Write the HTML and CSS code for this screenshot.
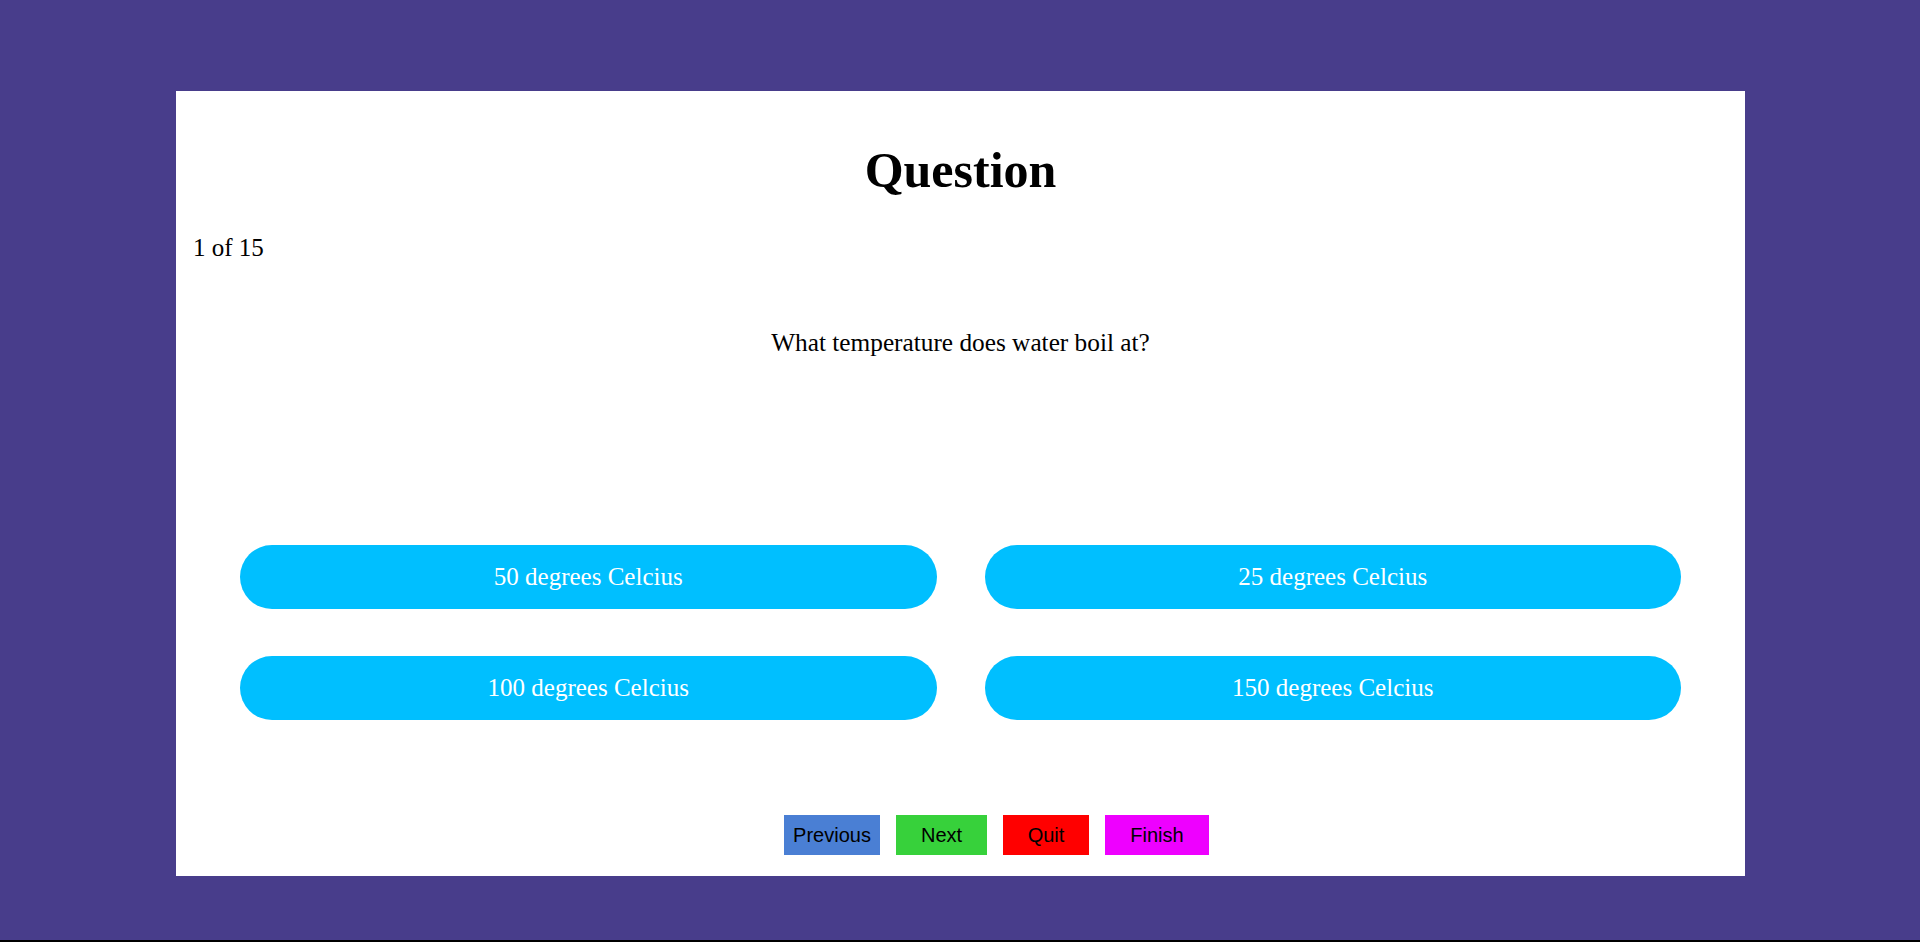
FILE: index.html
```html
<!DOCTYPE html>
<html lang="en">
<head>
<meta charset="utf-8">
<title>Quiz</title>
<link rel="stylesheet" href="styles.css">
</head>
<body>
<main class="card">
  <h1 class="title">Question</h1>
  <div class="counter">1 of 15</div>
  <p class="question">What temperature does water boil at?</p>
  <div class="answers">
    <button class="answer">50 degrees Celcius</button>
    <button class="answer">25 degrees Celcius</button>
    <button class="answer">100 degrees Celcius</button>
    <button class="answer">150 degrees Celcius</button>
  </div>
  <div class="nav">
    <button class="nav-btn prev">Previous</button>
    <button class="nav-btn next">Next</button>
    <button class="nav-btn quit">Quit</button>
    <button class="nav-btn finish">Finish</button>
  </div>
</main>
</body>
</html>
```
FILE: styles.css
```css
html, body {
  margin: 0;
  padding: 0;
}
body {
  background: #483D8B;
  height: 942px;
  box-sizing: border-box;
  border-bottom: 2px solid #000;
  padding-top: 91px;
  font-family: "Liberation Serif", "Times New Roman", serif;
  color: #000;
  overflow: hidden;
}
.card {
  margin: 0 175px 0 176px;
  height: 785px;
  background: #fff;
  display: flex;
  flex-direction: column;
}
.title {
  margin: 51px 0 0;
  font-size: 50px;
  font-weight: bold;
  line-height: 57px;
  text-align: center;
}
.counter {
  margin: 35px 0 0 17px;
  font-size: 25px;
  line-height: 28px;
}
.question {
  margin: 66px 0 0;
  font-size: 25.3px;
  line-height: 28px;
  text-align: center;
}
.answers {
  margin: 189px 64px 0;
  display: grid;
  grid-template-columns: 1fr 1fr;
  column-gap: 48px;
  row-gap: 47px;
}
.answer {
  height: 64px;
  border: none;
  border-radius: 32px;
  background: #00BFFF;
  color: #fff;
  font-family: "Liberation Serif", "Times New Roman", serif;
  font-size: 25px;
  line-height: 28px;
  padding: 0;
  cursor: pointer;
}
.nav {
  margin-top: 95px;
  padding-left: 72px;
  display: flex;
  justify-content: center;
  gap: 16px;
}
.nav-btn {
  height: 40px;
  border: none;
  padding: 0;
  font-family: "Liberation Sans", Arial, sans-serif;
  font-size: 20px;
  line-height: 23px;
  color: #000;
  cursor: pointer;
}
.prev { width: 96px; background: #4A7FD4; }
.next { width: 91px; background: #37D13B; }
.quit { width: 86px; background: #FF0000; }
.finish { width: 104px; background: #EE00FF; }
```
